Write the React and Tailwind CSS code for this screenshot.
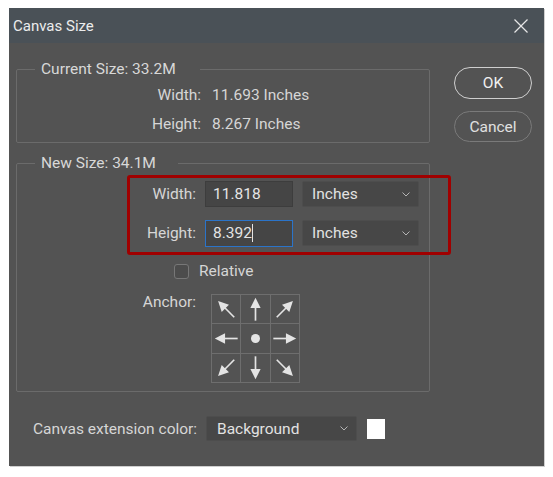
import React from "react";

const Arrow = ({ rot }) => (
  <svg width="100%" height="100%" viewBox="0 0 30 30">
    <g transform={`rotate(${rot} 15 15)`}>
      <line x1="15" y1="27.5" x2="15" y2="12" stroke="#e4e4e4" strokeWidth="1.8" />
      <polygon points="15,3 9.5,14 20.5,14" fill="#e4e4e4" />
    </g>
  </svg>
);

const Chevron = () => (
  <svg width="8" height="5" viewBox="0 0 8 5">
    <polyline points="0.5,0.5 4,4 7.5,0.5" fill="none" stroke="#b4b4b4" strokeWidth="1" />
  </svg>
);

const Select = ({ value, w }) => (
  <div className={`${w} h-[26px] bg-[#474747] border border-[#4d4d4d] rounded-[2px] flex items-center justify-between pl-[9px] pr-[8px] text-[#e2e2e2]`}>
    <span>{value}</span>
    <Chevron />
  </div>
);

export default function App() {
  const cells = [
    { rot: -45 }, { rot: 0 }, { rot: 45 },
    { rot: -90 }, { dot: true }, { rot: 90 },
    { rot: -135 }, { rot: 180 }, { rot: 135 },
  ];
  return (
    <div className="w-[553px] h-[477px] bg-white pt-[8px] pl-[9px] font-['Roboto','Noto_Sans',sans-serif] text-[15.5px] leading-[20px]">
      <div className="relative w-[535px] h-[458px] bg-[#535353] flex flex-col shadow-[1px_1px_0_#cfcfcf]">
        {/* Title bar */}
        <div className="h-[35px] bg-[#4a5157] flex items-center justify-between pl-[4px] pr-[16px]">
          <span className="text-[#ececec] text-[15px]">Canvas Size</span>
          <svg width="14" height="14" viewBox="0 0 14 14">
            <line x1="0.5" y1="0.5" x2="13.5" y2="13.5" stroke="#e6e6e6" strokeWidth="1.3" />
            <line x1="13.5" y1="0.5" x2="0.5" y2="13.5" stroke="#e6e6e6" strokeWidth="1.3" />
          </svg>
        </div>

        {/* Body */}
        <div className="relative flex-1 flex pl-[7px] pt-[16px]">
          <div className="w-[414px] flex flex-col">
            {/* Current size */}
            <fieldset className="border border-[#6b6b6b] rounded-[2px] pt-[6px] pb-[8px] flex flex-col gap-[9px] text-[#d6d6d6]">
              <legend className="ml-[18px] pl-[6px] pr-[24px] leading-[20px] text-[#d8d8d8]">Current Size: 33.2M</legend>
              <div className="flex h-[20px]">
                <span className="w-[184px] text-right">Width:</span>
                <span className="ml-[11px]">11.693 Inches</span>
              </div>
              <div className="flex h-[20px]">
                <span className="w-[184px] text-right">Height:</span>
                <span className="ml-[11px]">8.267 Inches</span>
              </div>
            </fieldset>

            {/* New size */}
            <fieldset className="mt-[10px] border border-[#6b6b6b] rounded-[2px] pt-[8px] pb-[8px] flex flex-col text-[#d6d6d6]">
              <legend className="ml-[18px] pl-[6px] pr-[22px] leading-[20px] text-[#d8d8d8]">New Size: 34.1M</legend>
              <div className="flex items-center h-[26px]">
                <span className="w-[179px] text-right">Width:</span>
                <div className="ml-[9px] w-[88px] h-[26px] bg-[#454545] border border-[#3d3d3d] flex items-center pl-[7px] text-[#e4e4e4]">11.818</div>
                <div className="ml-[9px]"><Select value="Inches" w="w-[117px]" /></div>
              </div>
              <div className="flex items-center h-[26px] mt-[13px]">
                <span className="w-[179px] text-right">Height:</span>
                <div className="ml-[9px] w-[88px] h-[27px] bg-[#454545] border border-[#2b74c9] flex items-center pl-[7px] text-[#e4e4e4]">
                  <span>8.392</span>
                  <span className="w-px h-[18px] bg-[#e4e4e4]" />
                </div>
                <div className="ml-[9px]"><Select value="Inches" w="w-[117px]" /></div>
              </div>
              <div className="flex items-center h-[20px] mt-[15px]">
                <span className="ml-[157px] w-[15px] h-[15px] rounded-[3px] border border-[#777777] bg-[#4c4c4c]" />
                <span className="ml-[10px]">Relative</span>
              </div>
              <div className="flex items-start mt-[11px]">
                <span className="w-[179px] text-right">Anchor:</span>
                <div className="ml-[15px] mt-[2px] grid grid-cols-[28px_29px_28px] grid-rows-[28px_29px_28px] gap-px p-px bg-[#6e6e6e]">
                  {cells.map((c, i) => (
                    <div key={i} className="bg-[#535353] flex items-center justify-center">
                      {c.dot ? (
                        <span className="w-[9px] h-[9px] rounded-full bg-[#e4e4e4]" />
                      ) : (
                        <Arrow rot={c.rot} />
                      )}
                    </div>
                  ))}
                </div>
              </div>
            </fieldset>

            {/* Extension color */}
            <div className="mt-[24px] flex items-center">
              <span className="w-[190px] pl-[17px] whitespace-nowrap text-[#d6d6d6]">Canvas extension color:</span>
              <div className="w-[151px] h-[25px] bg-[#474747] border border-[#4d4d4d] rounded-[2px] flex items-center justify-between pl-[10px] pr-[8px] text-[#e2e2e2]">
                <span>Background</span>
                <Chevron />
              </div>
              <span className="ml-[10px] w-[18px] h-[20px] bg-white" />
            </div>
          </div>

          {/* Buttons */}
          <div className="ml-[24px] pt-[8px] flex flex-col gap-[12px]">
            <button className="w-[78px] h-[32px] rounded-full border border-[#cfcfcf] text-[#f0f0f0] flex items-center justify-center">OK</button>
            <button className="w-[78px] h-[31px] rounded-full border border-[#7a7a7a] text-[#e0e0e0] flex items-center justify-center">Cancel</button>
          </div>

          {/* Annotation */}
          <div className="absolute top-[132px] left-[118px] w-[324px] h-[80px] border-[3px] border-[#a00000] rounded-[3px]" />
        </div>
      </div>
    </div>
  );
}
